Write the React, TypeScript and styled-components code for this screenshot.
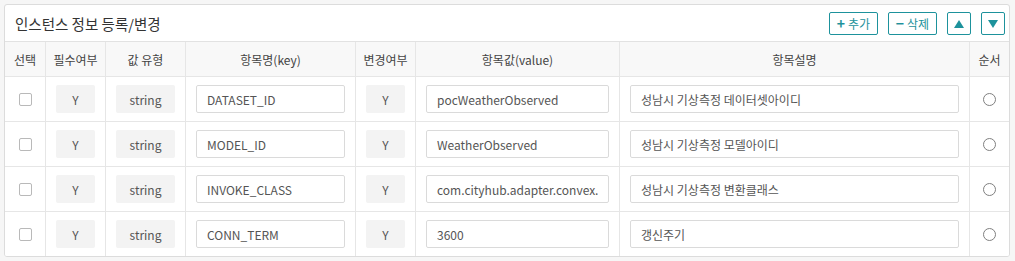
import React from "react";
import styled, { createGlobalStyle } from "styled-components";

const GlobalStyle = createGlobalStyle`
  html, body {
    margin: 0;
    padding: 0;
    background: #f6f6f6;
  }
  body {
    font-family: "Noto Sans CJK KR", "Noto Sans", sans-serif;
    font-size: 12px;
    color: #444;
  }
`;

const COLS = "41px 60px 80px 170px 60px 204px 350px 39px";
const TEAL = "#1d929c";

const Page = styled.div`
  padding: 4px 0 0 4px;
`;

const Panel = styled.div`
  width: 1006px;
  box-sizing: border-box;
  border: 1px solid #dcdcdc;
  border-radius: 3px;
  background: #fff;
  overflow: hidden;
`;

const TitleBar = styled.div`
  height: 37px;
  box-sizing: border-box;
  display: flex;
  align-items: center;
  justify-content: space-between;
  padding: 0 4px 0 10px;
  border-bottom: 1px solid #e2e2e2;
`;

const Title = styled.h2`
  margin: 0;
  font-size: 14.5px;
  font-weight: 400;
  color: #333;
  padding-top: 1px;
`;

const Actions = styled.div`
  display: flex;
  align-items: center;
  gap: 9px;
  padding-top: 1px;
`;

const ActionButton = styled.button<{ $square?: boolean }>`
  height: 23px;
  width: ${p => (p.$square ? "24px" : "49px")};
  box-sizing: border-box;
  border: 1px solid ${TEAL};
  border-radius: 2px;
  background: #fff;
  color: ${TEAL};
  font-family: inherit;
  font-size: 12px;
  padding: 0;
  display: flex;
  align-items: center;
  justify-content: center;
  gap: 3px;
  cursor: pointer;
  & + & {
    margin-left: ${p => (p.$square ? "1px" : "0")};
  }
`;

const Sign = styled.span`
  font-weight: 700;
  font-size: 14px;
  line-height: 1;
  margin-top: -1px;
`;

const Row = styled.div<{ $head?: boolean }>`
  display: grid;
  grid-template-columns: ${COLS};
  box-sizing: border-box;
  height: ${p => (p.$head ? "35px" : "45px")};
  background: ${p => (p.$head ? "#f8f8f8" : "#fff")};
  border-bottom: 1px solid #e6e6e6;
  &:last-child {
    border-bottom: none;
    height: 44px;
  }
`;

const Cell = styled.div<{ $head?: boolean }>`
  box-sizing: border-box;
  display: flex;
  align-items: center;
  justify-content: center;
  padding: 0 10px;
  border-right: 1px solid #e6e6e6;
  color: ${p => (p.$head ? "#444" : "#555")};
  white-space: nowrap;
  &:last-child {
    border-right: none;
  }
`;

const Badge = styled.div`
  width: 100%;
  height: 28px;
  background: #f3f3f3;
  border-radius: 2px;
  display: flex;
  align-items: center;
  justify-content: center;
  color: #555;
`;

const TextInput = styled.input`
  width: 100%;
  height: 28px;
  box-sizing: border-box;
  border: 1px solid #dadada;
  border-radius: 2px;
  padding: 0 10px;
  font-family: inherit;
  font-size: 12px;
  color: #555;
  background: #fff;
  outline: none;
`;

const Check = styled.span`
  width: 13px;
  height: 13px;
  box-sizing: border-box;
  border: 1px solid #b9b9b9;
  border-radius: 2px;
  background: #fff;
`;

const Radio = styled.span`
  width: 13px;
  height: 13px;
  box-sizing: border-box;
  border: 1px solid #808080;
  border-radius: 50%;
  background: #fff;
`;

const Triangle = ({ up }: { up?: boolean }) => (
  <svg width="10" height="8" viewBox="0 0 10 8">
    <path d={up ? "M5 0 L10 8 L0 8 Z" : "M0 0 L10 0 L5 8 Z"} fill={TEAL} />
  </svg>
);

const headers = ["선택", "필수여부", "값 유형", "항목명(key)", "변경여부", "항목값(value)", "항목설명", "순서"];

const rows = [
  { key: "DATASET_ID", value: "pocWeatherObserved", desc: "성남시 기상측정 데이터셋아이디" },
  { key: "MODEL_ID", value: "WeatherObserved", desc: "성남시 기상측정 모델아이디" },
  { key: "INVOKE_CLASS", value: "com.cityhub.adapter.convex.ConvWeatherObserved", desc: "성남시 기상측정 변환클래스" },
  { key: "CONN_TERM", value: "3600", desc: "갱신주기" },
];

export default function App() {
  return (
    <>
      <GlobalStyle />
      <Page>
        <Panel>
          <TitleBar>
            <Title>인스턴스 정보 등록/변경</Title>
            <Actions>
              <ActionButton><Sign>+</Sign>추가</ActionButton>
              <ActionButton><Sign>−</Sign>삭제</ActionButton>
              <ActionButton $square><Triangle up /></ActionButton>
              <ActionButton $square><Triangle /></ActionButton>
            </Actions>
          </TitleBar>
          <Row $head>
            {headers.map(h => (
              <Cell $head key={h}>{h}</Cell>
            ))}
          </Row>
          {rows.map(r => (
            <Row key={r.key}>
              <Cell><Check /></Cell>
              <Cell><Badge>Y</Badge></Cell>
              <Cell><Badge>string</Badge></Cell>
              <Cell><TextInput defaultValue={r.key} /></Cell>
              <Cell><Badge>Y</Badge></Cell>
              <Cell><TextInput defaultValue={r.value} /></Cell>
              <Cell><TextInput defaultValue={r.desc} /></Cell>
              <Cell><Radio /></Cell>
            </Row>
          ))}
        </Panel>
      </Page>
    </>
  );
}
